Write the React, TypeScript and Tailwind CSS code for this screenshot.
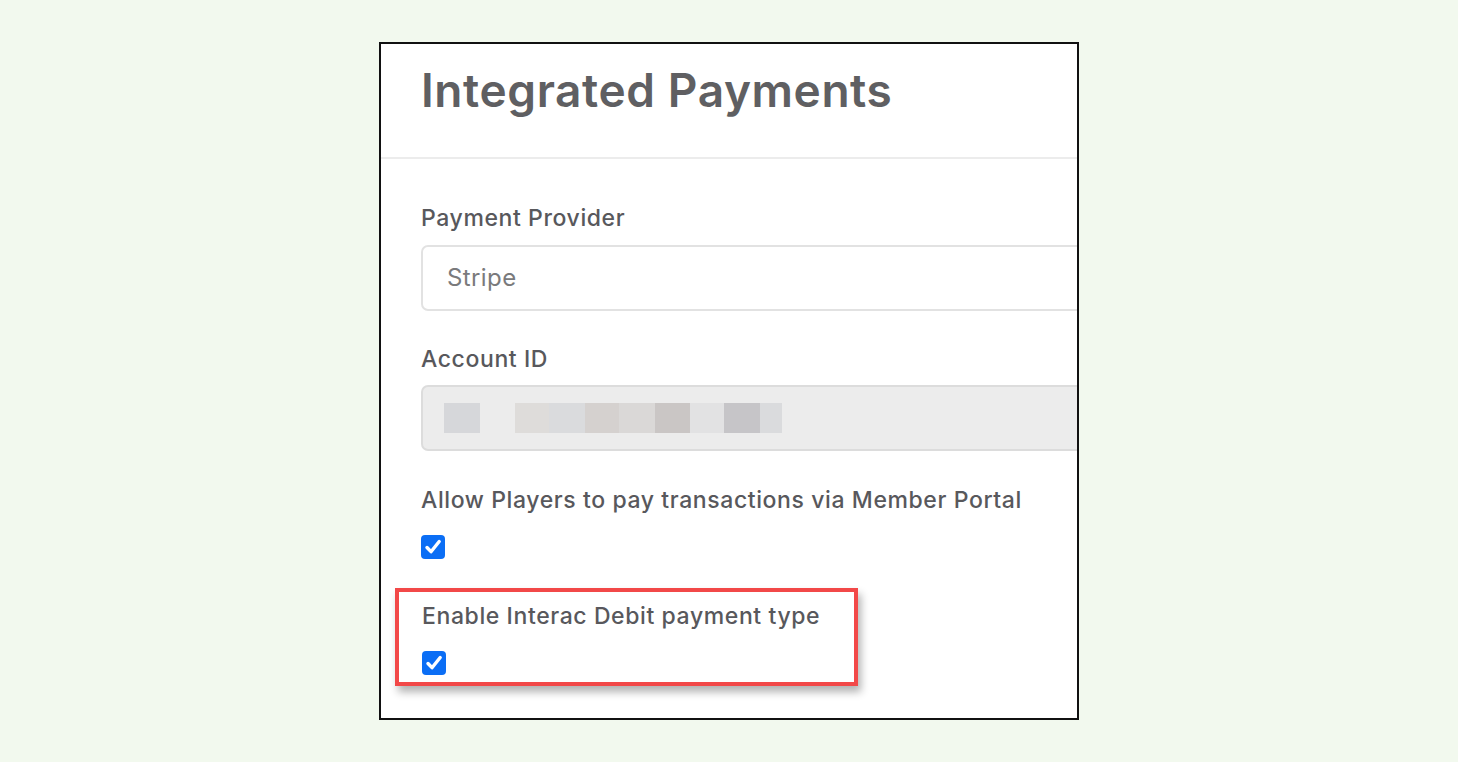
import React from "react";

function Check() {
  return (
    <div className="w-6 h-6 rounded-[4px] bg-[#0b6ef5] flex items-center justify-center">
      <svg width="24" height="24" viewBox="0 0 24 24" fill="none">
        <path d="M6 12.5l4 4.2L18.2 6.5" stroke="white" strokeWidth="3.4" strokeLinecap="round" strokeLinejoin="round" />
      </svg>
    </div>
  );
}

const blurBlocks = [
  { w: 36, c: "bg-[#d6d7da]" },
  { w: 35, c: "bg-[#ececec]" },
  { w: 34, c: "bg-[#dedcda]" },
  { w: 36, c: "bg-[#dadbdd]" },
  { w: 34, c: "bg-[#d5d1cf]" },
  { w: 36, c: "bg-[#dad8d7]" },
  { w: 35, c: "bg-[#cac6c5]" },
  { w: 34, c: "bg-[#e2e2e3]" },
  { w: 36, c: "bg-[#c6c5c8]" },
  { w: 22, c: "bg-[#dadbdd]" },
];

export default function App() {
  return (
    <div className="w-full h-[762px] bg-[#f2f9ee] flex justify-center pt-[42px] font-['Inter',sans-serif]">
      <div className="w-[700px] h-[678px] bg-white border-2 border-[#111] overflow-hidden flex flex-col">
        <div className="h-[115px] border-b-2 border-[#ececec] pl-[40px] pt-[18px]">
          <h1 className="text-[46px] font-semibold text-[#5f5f62] tracking-[0.6px] leading-[56px]">
            Integrated Payments
          </h1>
        </div>
        <div className="pl-[40px] pt-[44px] flex flex-col">
          <label className="text-[23px] font-medium text-[#58585c] tracking-[0.6px] leading-[30px]">Payment Provider</label>
          <div className="mt-[12px] w-[720px] h-[66px] rounded-[7px] border-2 border-[#e2e2e2] flex items-center pl-[24px]">
            <span className="text-[24px] text-[#7a7a7c] tracking-[0.4px]">Stripe</span>
          </div>
          <label className="mt-[33px] text-[23px] font-medium text-[#58585c] tracking-[0.6px] leading-[30px]">Account ID</label>
          <div className="mt-[11px] w-[720px] h-[66px] rounded-[7px] border-2 border-[#dcdcdc] bg-[#ececec] flex items-center pl-[21px]">
            <div className="flex h-[30px]">
              {blurBlocks.map((b, i) => (
                <div key={i} className={b.c} style={{ width: b.w }} />
              ))}
            </div>
          </div>
          <label className="mt-[34px] text-[23px] font-medium text-[#58585c] tracking-[0.6px] leading-[30px]">
            Allow Players to pay transactions via Member Portal
          </label>
          <div className="mt-[20px]">
            <Check />
          </div>
        </div>
        <div className="ml-[14px] mt-[29px] w-[463px] h-[98px] border-4 border-[#f24848] shadow-[3px_6px_8px_rgba(0,0,0,0.3)] pl-[23px] pt-[9px]">
          <label className="text-[23px] font-medium text-[#58585c] tracking-[0.6px] leading-[30px]">Enable Interac Debit payment type</label>
          <div className="mt-[20px]">
            <Check />
          </div>
        </div>
      </div>
    </div>
  );
}
